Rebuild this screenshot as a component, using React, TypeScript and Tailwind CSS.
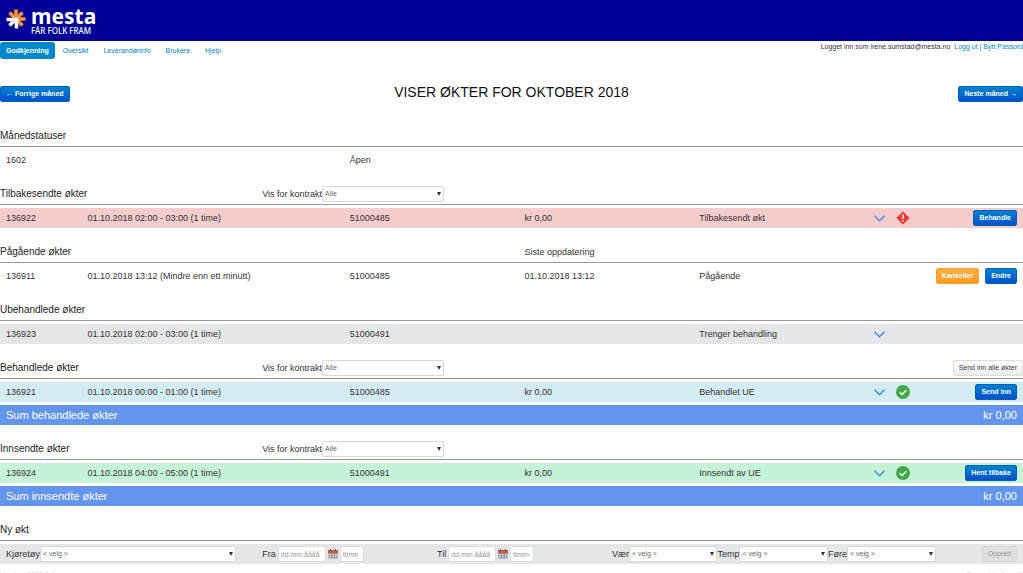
import { useState, type ReactNode } from 'react';

const GRID = 'grid grid-cols-12 items-center gap-x-[26px]';

const BTN = 'flex h-4 items-center rounded-xs border px-[5px] text-[7px] whitespace-nowrap';

const BTN_VARIANTS = {
  primary: 'border-[#0060bd] bg-linear-to-b from-[#0082cc] to-[#004fcc] font-bold text-white',
  warning: 'border-[#f5a32c] bg-linear-to-b from-[#fbb040] to-[#f89c1c] font-bold text-white',
  light: 'border-[#dcdcdc] bg-linear-to-b from-white to-[#ececec] text-[#444]',
  disabled: 'border-[#d6d6d6] bg-[#e0e0e0] text-[#999]',
};

type ButtonProps = {
  variant?: keyof typeof BTN_VARIANTS;
  disabled?: boolean;
  children: ReactNode;
};

function Button({ variant = 'primary', disabled, children }: ButtonProps) {
  return (
    <button type="button" disabled={disabled} className={`${BTN} ${BTN_VARIANTS[variant]}`}>
      {children}
    </button>
  );
}

type SelectProps = { id: string; placeholder: string; options?: string[]; className?: string };

function Select({ id, placeholder, options = [], className = '' }: SelectProps) {
  const [value, setValue] = useState('');
  return (
    <span className={`relative flex min-w-0 ${className}`}>
      <select
        id={id}
        value={value}
        onChange={(e) => setValue(e.target.value)}
        className="h-4 w-full appearance-none rounded-xs border border-[#d8d8d8] bg-white pr-3 pl-[2px] text-[7px] text-[#666]"
      >
        <option value="">{placeholder}</option>
        {options.map((o) => (
          <option key={o}>{o}</option>
        ))}
      </select>
      <svg viewBox="0 0 4 4" className="pointer-events-none absolute top-[6px] right-[3px] size-1" fill="#333">
        <path d="M0 0h4L2 4z" />
      </svg>
    </span>
  );
}

function Logo() {
  return (
    <a href="#" className="flex items-start gap-[5px] text-white">
      <svg viewBox="0 0 20 20" className="mt-[2px] size-5" fill="none" strokeWidth="3.6">
        <g stroke="#f7913d">
          <path d="M10 9V0.5" />
          <path d="M10.5 9.500l6-6" />
          <path d="M11 10h8.500" />
          <path d="M10.500 10.500l6 6" />
          <path d="M9.500 9.500l-6-6" />
        </g>
        <g stroke="#fff">
          <path d="M0.500 10.500H10.500v9" />
          <path d="M9.500 10.500l-6 6" />
        </g>
      </svg>
      <span className="flex flex-col font-['Noto_Sans',sans-serif]">
        <span className="text-[21px] leading-[19px] font-bold">mesta</span>
        <span className="text-[8px] leading-[10px] font-medium">FÅR FOLK FRAM</span>
      </span>
    </a>
  );
}

function Chevron() {
  return (
    <button type="button" aria-label="Vis detaljer" className="flex">
      <svg viewBox="0 0 11 7" className="h-[7px] w-[11px]" fill="none" stroke="#3f8fe0" strokeWidth="1.5">
        <path d="M0.5 0.7l5 5 5-5" />
      </svg>
    </button>
  );
}

function ErrorIcon() {
  return (
    <svg viewBox="0 0 14 14" className="size-[14px]">
      <path d="M7 0.8L13.2 7 7 13.2 0.8 7z" fill="#ee3a34" stroke="#ee3a34" strokeLinejoin="round" />
      <path d="M7 3.5v4.2M7 9v1.5" stroke="#fff" strokeWidth="1.5" />
    </svg>
  );
}

function OkIcon() {
  return (
    <svg viewBox="0 0 14 14" className="size-[14px]">
      <circle cx="7" cy="7" r="7" fill="#43a847" />
      <path d="M3.8 7.2l2.3 2.3 4.2-4.3" fill="none" stroke="#fff" strokeWidth="1.5" />
    </svg>
  );
}

function CalendarIcon() {
  return (
    <button type="button" aria-label="Velg dato" className="flex shrink-0">
      <svg viewBox="0 0 10 10" className="size-[10px]">
        <path d="M0.5 1h9v8.5h-9z" fill="#8c8f96" />
        <path d="M0 1h10v3H0z" fill="#c75b39" />
        <path d="M2.5 0v2M7.5 0v2" stroke="#555" />
        <path d="M1.5 5h1.5v1.5H1.5zM4.2 5h1.5v1.5H4.2zM7 5h1.5v1.5H7zM1.5 7.3h1.5v1.2H1.5zM4.2 7.3h1.5v1.2H4.2zM7 7.3h1.5v1.2H7z" fill="#e4ebf5" />
      </svg>
    </button>
  );
}

type SectionProps = {
  title: string;
  filterId?: string;
  note?: string;
  action?: ReactNode;
  children: ReactNode;
};

function Section({ title, filterId, note, action, children }: SectionProps) {
  return (
    <section>
      <div className={`${GRID} h-[21px] border-b border-[#999]`}>
        <h2 className="col-span-3 text-[10px] text-[#222]">{title}</h2>
        {filterId && (
          <div className="col-span-3 flex items-center pr-[55px]">
            <label htmlFor={filterId} className="shrink-0">Vis for kontrakt</label>
            <Select id={filterId} placeholder="Alle" options={['51000485', '51000491']} className="flex-1" />
          </div>
        )}
        {note && <span className="col-span-3 col-start-7">{note}</span>}
        {action && <div className="col-span-2 col-start-11 flex justify-end">{action}</div>}
      </div>
      <div className="mt-[3px] flex flex-col gap-[3px]">{children}</div>
    </section>
  );
}

type RowProps = {
  id: string;
  time: string;
  contract: string;
  amount?: string;
  status: string;
  color?: string;
  expandable?: boolean;
  icon?: ReactNode;
  actions?: ReactNode;
};

function Row({ id, time, contract, amount, status, color = '', expandable, icon, actions }: RowProps) {
  return (
    <div className={`${GRID} h-5 ${color}`}>
      <span className="pl-[6px]">{id}</span>
      <span className="col-span-3">{time}</span>
      <span className="col-span-2">{contract}</span>
      <span className="col-span-2">{amount}</span>
      <span className="col-span-2">{status}</span>
      <div className="col-span-2 flex items-center pr-[6px]">
        {expandable && <Chevron />}
        {icon && <span className="ml-[11px]">{icon}</span>}
        <div className="ml-auto flex gap-[6px]">{actions}</div>
      </div>
    </div>
  );
}

function SumRow({ label, amount }: { label: string; amount: string }) {
  return (
    <div className="flex h-5 items-center justify-between bg-[#6495ed] px-[6px] text-[11px] text-white">
      <span>{label}</span>
      <span>{amount}</span>
    </div>
  );
}

function DateTimeField({ id, label }: { id: string; label: string }) {
  const field = 'h-4 rounded-xs border border-[#ddd] bg-white px-[2px] text-[7px] placeholder:text-[#999]';
  return (
    <div className="col-span-2 flex items-center gap-[2px]">
      <label htmlFor={id}>{label}</label>
      <input id={id} placeholder="dd.mm.åååå" className={`${field} w-12`} />
      <CalendarIcon />
      <input aria-label={`${label} tid`} placeholder="ttmm" className={`${field} w-6`} />
    </div>
  );
}

const NAV = ['Oversikt', 'Leverandørinfo', 'Brukere', 'Hjelp'];

export default function App() {
  return (
    <div className="h-screen overflow-hidden bg-white font-['Liberation_Sans',sans-serif] text-[9px] leading-3 text-[#333]">
      <header className="h-[41px] bg-[#000096] px-[6px] pt-[7px]">
        <Logo />
      </header>

      <div className="flex items-start justify-between text-[7px]">
        <nav className="mt-px flex items-center gap-px text-[#0082c8]">
          <a href="#" className="flex h-[17px] items-center rounded-[3px] bg-[#0088cc] px-[6px] font-bold text-white">
            Godkjenning
          </a>
          {NAV.map((item) => (
            <a key={item} href="#" className="px-[7px]">{item}</a>
          ))}
        </nav>
        <p>
          Logget inn som irene.sumstad@mesta.no&nbsp;{' '}
          <span className="text-[#0082c8]">
            <a href="#">Logg ut</a> | <a href="#">Bytt Passord</a>
          </span>
        </p>
      </div>

      <div className="mt-[27px] mb-6 grid grid-cols-3 items-start">
        <div className="flex"><Button>← Forrige måned</Button></div>
        <h1 className="text-center text-[14px] leading-3 text-[#111]">VISER ØKTER FOR OKTOBER 2018</h1>
        <div className="flex justify-end"><Button>Neste måned →</Button></div>
      </div>

      <main className="flex flex-col gap-[14px]">
        <Section title="Månedstatuser">
          <div className={`${GRID} h-5`}>
            <span className="col-span-4 pl-[6px]">1602</span>
            <span className="col-span-2">Åpen</span>
          </div>
        </Section>

        <Section title="Tilbakesendte økter" filterId="filter-returned">
          <Row
            id="136922"
            time="01.10.2018 02:00 - 03:00 (1 time)"
            contract="51000485"
            amount="kr 0,00"
            status="Tilbakesendt økt"
            color="bg-[#f4cccc]"
            expandable
            icon={<ErrorIcon />}
            actions={<Button>Behandle</Button>}
          />
        </Section>

        <Section title="Pågående økter" note="Siste oppdatering">
          <Row
            id="136911"
            time="01.10.2018 13:12 (Mindre enn ett minutt)"
            contract="51000485"
            amount="01.10.2018 13:12"
            status="Pågående"
            actions={
              <>
                <Button variant="warning">Kanseller</Button>
                <Button>Endre</Button>
              </>
            }
          />
        </Section>

        <Section title="Ubehandlede økter">
          <Row
            id="136923"
            time="01.10.2018 02:00 - 03:00 (1 time)"
            contract="51000491"
            status="Trenger behandling"
            color="bg-[#e4e6e7]"
            expandable
          />
        </Section>

        <Section
          title="Behandlede økter"
          filterId="filter-processed"
          action={<Button variant="light">Send inn alle økter</Button>}
        >
          <Row
            id="136921"
            time="01.10.2018 00:00 - 01:00 (1 time)"
            contract="51000485"
            amount="kr 0,00"
            status="Behandlet UE"
            color="bg-[#d3ebf2]"
            expandable
            icon={<OkIcon />}
            actions={<Button>Send inn</Button>}
          />
          <SumRow label="Sum behandlede økter" amount="kr 0,00" />
        </Section>

        <Section title="Innsendte økter" filterId="filter-submitted">
          <Row
            id="136924"
            time="01.10.2018 04:00 - 05:00 (1 time)"
            contract="51000491"
            amount="kr 0,00"
            status="Innsendt av UE"
            color="bg-[#c6f3d7]"
            expandable
            icon={<OkIcon />}
            actions={<Button>Hent tilbake</Button>}
          />
          <SumRow label="Sum innsendte økter" amount="kr 0,00" />
        </Section>

        <Section title="Ny økt">
          <form className={`${GRID} h-5 bg-[#e4e6e7]`}>
            <div className="col-span-3 flex items-center pl-[6px]">
              <label htmlFor="vehicle">Kjøretøy</label>
              <Select id="vehicle" placeholder="< velg >" className="flex-1" />
            </div>
            <DateTimeField id="from" label="Fra" />
            <DateTimeField id="to" label="Til" />
            <div className="col-span-4 col-start-8 flex items-center">
              <label htmlFor="weather">Vær</label>
              <Select id="weather" placeholder="< velg >" className="flex-1" />
              <label htmlFor="temperature">Temp</label>
              <Select id="temperature" placeholder="< velg >" className="flex-1" />
              <label htmlFor="surface">Føre</label>
              <Select id="surface" placeholder="< velg >" className="flex-1" />
            </div>
            <div className="flex justify-end pr-[6px]">
              <Button variant="disabled" disabled>Opprett</Button>
            </div>
          </form>
        </Section>
      </main>

      <footer className="mt-[5px] flex justify-between text-[7px] text-[#ccc]">
        <span>Version: 2018.9.4</span>
        <span>Support by Innsoft</span>
      </footer>
    </div>
  );
}
